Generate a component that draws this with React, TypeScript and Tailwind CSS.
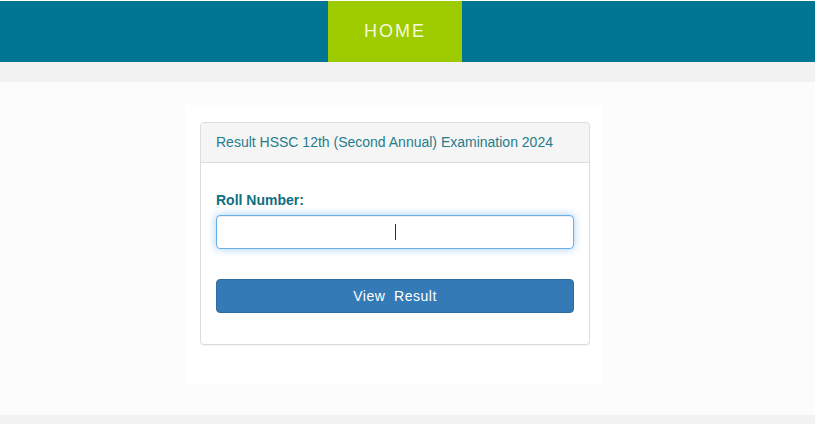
import { useState } from 'react'

export default function App() {
  const [roll, setRoll] = useState('')

  return (
    <div className="min-h-[424px] w-full bg-[#fcfcfc] font-['Liberation_Sans',Arial,sans-serif]">
      <div className="h-px bg-white" />
      <nav className="h-[61px] bg-[#007692]">
        <div className="flex h-full w-[790px] justify-center">
          <a
            href="#"
            className="flex h-full w-[134px] items-center justify-center bg-[#9dcb00] text-[18px] tracking-[2px] text-[#f4f8dc]"
          >
            HOME
          </a>
        </div>
      </nav>
      <div className="h-5 bg-[#f2f2f2]" />

      <div className="flex w-[788px] justify-center pt-[23px]">
        <div className="w-[418px] bg-white pb-[39px] pl-[15px] pr-[13px] pt-[17px]">
          <div className="rounded border border-[#dddddd] bg-white shadow-[0_1px_1px_rgba(0,0,0,0.05)]">
            <div className="flex h-[40px] items-center rounded-t border-b border-[#dddddd] bg-[#f5f5f5] px-[15px] text-[14px] text-[#1f7d8c]">
              Result HSSC 12th (Second Annual) Examination 2024
            </div>
            <div className="pb-[31px] pl-[15px] pr-[15px] pt-[27px]">
              <label className="mb-[5px] block text-[14px] font-bold leading-5 text-[#0f6f80]">
                Roll Number:
              </label>
              <div className="relative">
                <input
                  value={roll}
                  onChange={(e) => setRoll(e.target.value)}
                  className="block h-[34px] w-full rounded border border-[#66afe9] bg-white px-3 text-center text-[14px] text-[#555] shadow-[inset_0_1px_1px_rgba(0,0,0,0.075),0_0_8px_rgba(102,175,233,0.6)] outline-none"
                />
                {roll === '' && (
                  <span className="pointer-events-none absolute left-[179px] top-[9px] h-[16px] w-px bg-[#333]" />
                )}
              </div>
              <button
                type="button"
                className="mt-[30px] block h-[34px] w-full rounded border border-[#2e6da4] bg-[#337ab7] text-[14px] tracking-[0.5px] text-white"
              >
                View&nbsp; Result
              </button>
            </div>
          </div>
        </div>
      </div>

      <div className="mt-[31px] h-[10px] bg-[#f2f2f2]" />
    </div>
  )
}
